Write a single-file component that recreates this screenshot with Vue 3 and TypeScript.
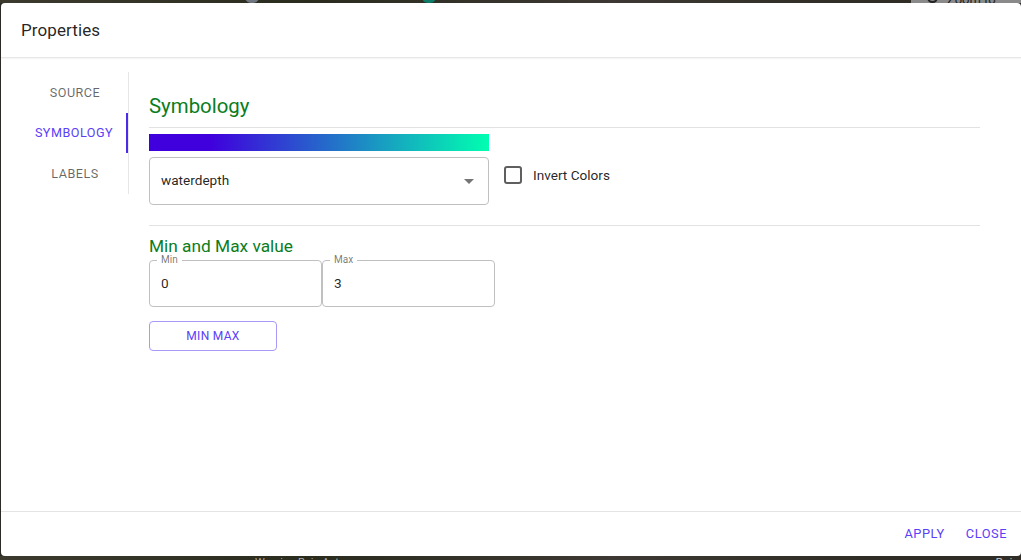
<script setup lang="ts">
const tabs: string[] = ['SOURCE', 'SYMBOLOGY', 'LABELS']
const active = 'SYMBOLOGY'
</script>

<template>
  <div class="backdrop">
    <div class="strip top">
      <span class="blob teal"></span>
      <span class="blob grey"></span>
      <span class="pale-corner"><span class="lens"></span>Zoom to</span>
    </div>
    <section class="dialog">
      <header class="head">Properties</header>
      <div class="body">
        <nav class="tabs">
          <div
            v-for="t in tabs"
            :key="t"
            class="tab"
            :class="{ on: t === active }"
          >{{ t }}</div>
        </nav>
        <main class="panel">
          <h2 class="title">Symbology</h2>
          <hr class="rule first" />
          <div class="ramp-row">
            <div class="ramp-col">
              <div class="ramp"></div>
              <div class="select">
                <span>waterdepth</span>
                <span class="arrow"></span>
              </div>
            </div>
            <label class="check">
              <span class="box"></span>
              <span>Invert Colors</span>
            </label>
          </div>
          <hr class="rule second" />
          <h3 class="sub">Min and Max value</h3>
          <div class="fields">
            <fieldset class="field">
              <legend>Min</legend>
              <span>0</span>
            </fieldset>
            <fieldset class="field">
              <legend>Max</legend>
              <span>3</span>
            </fieldset>
          </div>
          <button class="minmax">MIN MAX</button>
        </main>
      </div>
      <footer class="foot">
        <span class="action">APPLY</span>
        <span class="action">CLOSE</span>
      </footer>
    </section>
    <div class="strip bottom">
      <span class="warn">Warning Rain Act</span>
      <span class="rain">Rain</span>
    </div>
  </div>
</template>

<style>
html, body { margin: 0; background: #2b2a26; overflow: hidden; }
</style>

<style scoped>
.backdrop {
  width: 1021px;
  height: 560px;
  display: flex;
  flex-direction: column;
  overflow: hidden;
  font-family: Roboto, "Liberation Sans", sans-serif;
  background: #2b2a26;
}
.strip {
  flex: none;
  display: flex;
  align-items: center;
  overflow: hidden;
  background: linear-gradient(90deg, #3c3a2e, #2a2c1e 30%, #3d3833 60%, #2f2d25 85%);
}
.strip.top { height: 3px; position: relative; }
.blob { position: absolute; top: -3px; height: 6px; border-radius: 0 0 8px 8px; }
.blob.grey { left: 245px; width: 14px; background: #6f7680; }
.blob.teal { left: 422px; width: 14px; background: #0d7c68; }
.pale-corner {
  position: absolute;
  right: 0;
  top: 0;
  width: 110px;
  height: 3px;
  background: #8a8a8a;
  color: #222;
  font-size: 13px;
  line-height: 0;
  padding-left: 36px;
  box-sizing: border-box;
}
.lens {
  position: absolute;
  left: 16px;
  top: -8px;
  width: 7px;
  height: 7px;
  border: 2px solid #222;
  border-radius: 50%;
}
.dialog {
  flex: none;
  height: 553px;
  margin-left: 1px;
  background: #fff;
  border-radius: 4px;
  display: flex;
  flex-direction: column;
}
.head {
  height: 55px;
  flex: none;
  box-sizing: border-box;
  padding: 0 20px;
  line-height: 54px;
  font-size: 17px;
  letter-spacing: 0.1px;
  color: rgba(0, 0, 0, 0.87);
  border-bottom: 1px solid #e8e8e8;
  box-shadow: 0 1px 1px rgba(0, 0, 0, 0.04);
}
.body {
  flex: 1;
  display: flex;
  align-items: flex-start;
  min-height: 0;
  padding-top: 14px;
}
.tabs {
  width: 127px;
  flex: none;
  border-right: 1px solid #e6e6e6;
  height: 122px;
}
.tab {
  height: 40.7px;
  display: flex;
  align-items: center;
  justify-content: center;
  box-sizing: border-box;
  font-size: 12.6px;
  letter-spacing: 0.5px;
  color: rgba(0, 0, 0, 0.6);
  padding-left: 21px;
}
.tab.on {
  color: #5a40f8;
  border-right: 2px solid #4a2be8;
  padding-bottom: 2px;
}
.panel {
  flex: 1;
  min-width: 0;
  padding: 0 41px 0 20px;
}
.title {
  margin: 0;
  padding-top: 22px;
  height: 55px;
  box-sizing: border-box;
  font-size: 20.4px;
  line-height: 24px;
  font-weight: 400;
  color: #0a7d1e;
}
.rule { margin: 0; border: 0; height: 1px; background: #e2e2e2; }
.ramp-row { display: flex; align-items: flex-start; margin-top: 6px; }
.ramp-col { width: 340px; }
.ramp {
  height: 17px;
  background: linear-gradient(90deg, #3f00dd 0%, #3f00dd 18%, #00ffb0 100%);
}
.select {
  margin-top: 6px;
  height: 48px;
  box-sizing: border-box;
  border: 1px solid #c0c0c0;
  border-radius: 4px;
  padding: 0 14px 2px 11px;
  display: flex;
  align-items: center;
  justify-content: space-between;
  font-size: 13.6px;
  color: rgba(0, 0, 0, 0.87);
}
.arrow {
  width: 0;
  height: 0;
  border-left: 5px solid transparent;
  border-right: 5px solid transparent;
  border-top: 5px solid #757575;
  margin-top: 2px;
}
.check {
  display: flex;
  align-items: center;
  gap: 11px;
  margin: 32px 0 0 15px;
  font-size: 13.6px;
  color: rgba(0, 0, 0, 0.87);
}
.box {
  width: 18px;
  height: 18px;
  box-sizing: border-box;
  border: 2px solid #5f5f5f;
  border-radius: 3px;
}
.rule.second { margin-top: 20px; }
.sub {
  margin: 0;
  padding-top: 11px;
  height: 28px;
  box-sizing: border-box;
  font-size: 17.3px;
  line-height: 19px;
  font-weight: 400;
  color: #0a7d1e;
}
.fields { display: flex; margin-top: 1px; }
.field {
  width: 173px;
  height: 52px;
  box-sizing: border-box;
  margin: 0;
  padding: 0 11px;
  border: 1px solid #c0c0c0;
  border-radius: 4px;
  font-size: 13.6px;
  color: rgba(0, 0, 0, 0.87);
  display: block;
  line-height: 37px;
}
.field legend {
  font-size: 10px;
  line-height: 10px;
  height: 10px;
  padding: 0 4px;
  margin-left: -4px;
  color: rgba(0, 0, 0, 0.55);
}
.minmax {
  display: block;
  margin-top: 14px;
  width: 128px;
  height: 30px;
  padding: 0;
  background: #fff;
  border: 1px solid #a898f8;
  border-radius: 4px;
  color: #5a40f8;
  font-family: inherit;
  font-size: 12px;
  letter-spacing: 0.3px;
}
.foot {
  height: 45px;
  flex: none;
  box-sizing: border-box;
  border-top: 1px solid #e4e4e4;
  display: flex;
  align-items: center;
  justify-content: flex-end;
  gap: 21px;
  padding: 0 14px 2px;
}
.action {
  font-size: 12.8px;
  letter-spacing: 0.55px;
  color: #5a40f8;
}
.strip.bottom { height: 4px; position: relative; }
.warn {
  position: absolute;
  left: 255px;
  top: 0;
  font-size: 11px;
  color: #aaa;
}
.rain {
  position: absolute;
  right: 2px;
  top: 0;
  font-size: 12px;
  color: #bbb;
}
</style>
